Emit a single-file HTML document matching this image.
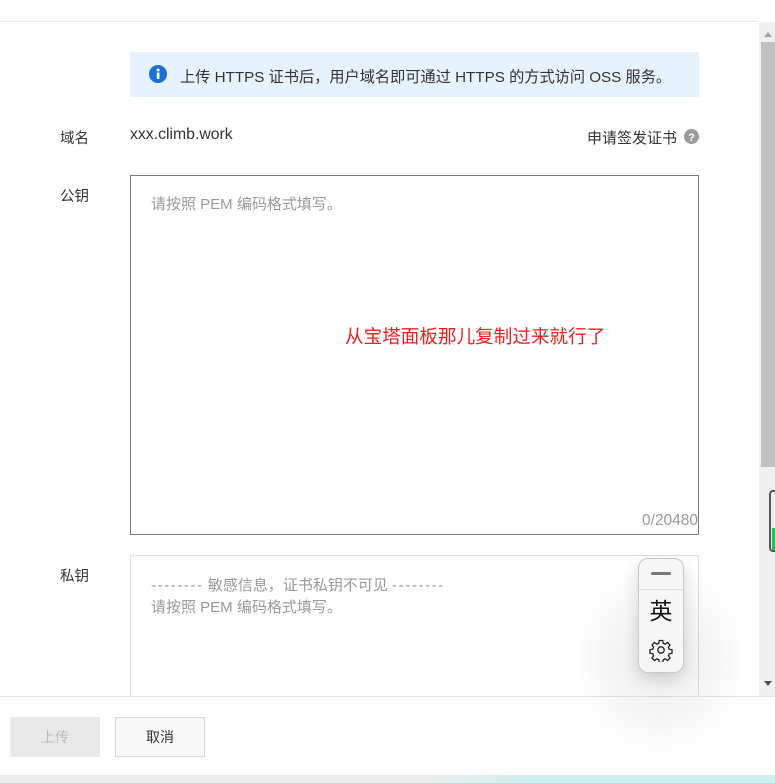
<!DOCTYPE html>
<html><head><meta charset="utf-8"><style>
*{margin:0;padding:0;box-sizing:border-box}
body{width:775px;height:783px;overflow:hidden;background:#fff;position:relative;font-family:"Liberation Sans","Noto Sans CJK SC",sans-serif;font-size:14px;color:#333}
.abs{position:absolute}
.lbl{position:absolute;left:60px;font-size:14.5px;color:#333}
</style></head><body>
<div class="abs" style="left:0;top:21px;width:759px;height:1px;background:#e8e8e8"></div>
<!-- scrollbar -->
<div class="abs" style="left:759px;top:22px;width:16px;height:674px;background:#f0f0f0"></div>
<div class="abs" style="left:764px;top:32px;width:0;height:0;border-left:4px solid transparent;border-right:4px solid transparent;border-bottom:5px solid #a3a3a3"></div>
<div class="abs" style="left:761px;top:42px;width:14px;height:425px;background:#c1c1c1"></div>
<div class="abs" style="left:764px;top:681px;width:0;height:0;border-left:4px solid transparent;border-right:4px solid transparent;border-top:5px solid #505050"></div>
<div class="abs" style="left:769px;top:490px;width:10px;height:62px;border:2px solid #555;border-radius:4px"></div>
<div class="abs" style="left:772px;top:528px;width:4px;height:22px;background:#2ebd59"></div>
<!-- info -->
<div class="abs" style="left:130px;top:52px;width:569px;height:45px;background:#e6f2fd"></div>
<svg class="abs" style="left:149px;top:65px" width="18" height="18" viewBox="0 0 18 18"><circle cx="9" cy="9" r="9" fill="#1f6fd6"/><rect x="7.8" y="7.5" width="2.6" height="6.5" fill="#fff"/><circle cx="9.1" cy="5" r="1.5" fill="#fff"/></svg>
<div class="abs" style="left:180px;top:65px;font-size:15.2px;color:#333;white-space:nowrap">上传 HTTPS 证书后，用户域名即可通过 HTTPS 的方式访问 OSS 服务。</div>
<div class="lbl" style="top:127px">域名</div>
<div class="abs" style="left:130px;top:126px;font-size:15.8px;color:#333">xxx.climb.work</div>
<div class="abs" style="left:587px;top:127px;font-size:15px;color:#333">申请签发证书</div>
<svg class="abs" style="left:684px;top:129px" width="15" height="15" viewBox="0 0 15 15"><circle cx="7.5" cy="7.5" r="7.5" fill="#9a9a9a"/><text x="7.5" y="12" font-size="11" font-weight="bold" text-anchor="middle" fill="#fff" font-family="Liberation Sans">?</text></svg>
<div class="lbl" style="top:185px">公钥</div>
<div class="abs" style="left:130px;top:175px;width:569px;height:360px;border:1px solid #7a7a7a"></div>
<div class="abs" style="left:151px;top:193px;color:#999;font-size:15px">请按照 PEM 编码格式填写。</div>
<div class="abs" style="left:345px;top:322px;color:#f0201e;font-size:18.6px;white-space:nowrap">从宝塔面板那儿复制过来就行了</div>
<div class="abs" style="left:600px;top:512px;width:98px;text-align:right;color:#999;font-size:15.5px">0/20480</div>
<div class="lbl" style="top:565px">私钥</div>
<div class="abs" style="left:130px;top:555px;width:569px;height:160px;border:1px solid #ddd"></div>
<div class="abs" style="left:151px;top:574px;color:#999;font-size:15px;white-space:nowrap"><span style="letter-spacing:1.6px">--------</span> 敏感信息，证书私钥不可见 <span style="letter-spacing:1.6px">--------</span></div>
<div class="abs" style="left:151px;top:596px;color:#999;font-size:15px">请按照 PEM 编码格式填写。</div>
<!-- footer -->
<div class="abs" style="left:0;top:696px;width:775px;height:79px;background:#fff;border-top:1px solid #e5e5e5"></div>
<div class="abs" style="left:10px;top:717px;width:90px;height:40px;background:#e9e9e9;color:#bbb;text-align:center;line-height:40px">上传</div>
<div class="abs" style="left:115px;top:717px;width:90px;height:40px;background:#f8f8f8;border:1px solid #d8d8d8;color:#333;text-align:center;line-height:38px">取消</div>
<div class="abs" style="left:0;top:775px;width:775px;height:8px;background:linear-gradient(90deg,#ececec 0%,#ececec 55%,#cdeff0 70%,#cdeff0 100%)"></div>
<!-- IME widget shadow -->
<div class="abs" style="left:570px;top:560px;width:180px;height:200px;background:radial-gradient(ellipse at 50% 50%,rgba(0,0,0,0.07) 0%,rgba(0,0,0,0.03) 45%,rgba(0,0,0,0) 70%)"></div>
<div class="abs" style="left:638px;top:558px;width:46px;height:115px;background:#f7f7f7;border:1px solid #c8c8c8;border-radius:10px;box-shadow:0 6px 16px rgba(0,0,0,0.15)">
<div style="position:absolute;left:12px;top:13px;width:20px;height:3px;border-radius:2px;background:#777"></div>
<div style="position:absolute;left:0;top:30px;width:44px;height:1px;background:#ddd"></div>
<div style="position:absolute;left:0;top:36px;width:44px;text-align:center;font-size:23px;color:#111;font-family:'Noto Sans CJK SC',sans-serif;line-height:28px">英</div>
<svg style="position:absolute;left:10px;top:79px" width="24" height="24" viewBox="0 0 24 24" fill="none" stroke="#222" stroke-width="1.3"><path d="M10.3 2.5h3.4l.6 2.8 1.9.8 2.4-1.6 2.4 2.4-1.6 2.4.8 1.9 2.8.6v3.4l-2.8.6-.8 1.9 1.6 2.4-2.4 2.4-2.4-1.6-1.9.8-.6 2.8h-3.4l-.6-2.8-1.9-.8-2.4 1.6-2.4-2.4 1.6-2.4-.8-1.9-2.8-.6v-3.4l2.8-.6.8-1.9-1.6-2.4 2.4-2.4 2.4 1.6 1.9-.8z"/><circle cx="12" cy="12" r="3.2"/></svg>
</div>
</body></html>
